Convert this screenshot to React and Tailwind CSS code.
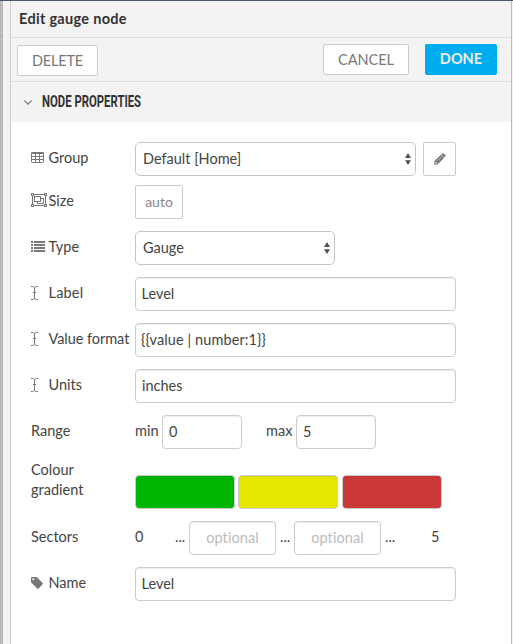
import React from "react";

const ICON = "#777777";

function TableIcon() {
  return (
    <svg width="13" height="11" viewBox="0 0 13 11" fill="none" stroke={ICON} strokeWidth="1">
      <rect x="0.5" y="0.5" width="12" height="10" rx="0.8" />
      <path d="M0.5 1.2H12.5" strokeWidth="1.6" />
      <path d="M0.5 4.5H12.5M0.5 7.5H12.5M4.5 1V10.5M8.5 1V10.5" />
    </svg>
  );
}

function ObjectGroupIcon() {
  return (
    <svg className="shrink-0" width="16" height="14" viewBox="0 0 16 14" fill="none" stroke={ICON} strokeWidth="1">
      <path d="M2.5 1.5H13.5M2.5 12.5H13.5M1.5 2.5V11.5M14.5 2.5V11.5" />
      <rect x="0.5" y="0.5" width="2" height="2" fill="#fff" />
      <rect x="13.5" y="0.5" width="2" height="2" fill="#fff" />
      <rect x="0.5" y="11.5" width="2" height="2" fill="#fff" />
      <rect x="13.5" y="11.5" width="2" height="2" fill="#fff" />
      <rect x="3.5" y="3.5" width="6" height="5" />
      <path d="M9.5 5.5H12.5V10.5H6.5V8.5" />
    </svg>
  );
}

function ListIcon() {
  return (
    <svg width="14" height="11" viewBox="0 0 14 11" fill={ICON}>
      <path d="M0 0H2V2H0zM0 3H2V5H0zM0 6H2V8H0zM0 9H2V11H0zM3 0H14V2H3zM3 3H14V5H3zM3 6H14V8H3zM3 9H14V11H3z" />
    </svg>
  );
}

function CursorIcon() {
  return (
    <svg className="translate-y-px" width="7" height="14" viewBox="0 0 7 14" fill="none" stroke={ICON} strokeWidth="1">
      <path d="M0 0.5H1.6C2.8 0.5 3.5 1 3.5 2V12C3.5 13 2.8 13.5 1.6 13.5H0M7 0.5H5.4C4.2 0.5 3.5 1 3.5 2M3.5 12C3.5 13 4.2 13.5 5.4 13.5H7M2 6.5H5" />
    </svg>
  );
}

function TagIcon() {
  return (
    <svg className="translate-y-px" width="12" height="12" viewBox="0 0 12 12" fill={ICON}>
      <path fillRule="evenodd" d="M0 1Q0 0 1 0H5Q5.8 0 6.5 .7L11.6 5.9Q12.2 6.6 11.6 7.3L7.6 11.4Q6.9 12 6.2 11.4L.7 6Q0 5.3 0 4.7zM2.3 1.3A1 1 0 1 0 2.3 3.3A1 1 0 1 0 2.3 1.3z" />
    </svg>
  );
}

function PencilIcon() {
  return (
    <svg className="-mt-px" width="12" height="12" viewBox="0 0 12 12" fill={ICON}>
      <path fillRule="evenodd" d="M0.3 8.3L6.9 1.8L10 4.9L3.5 11.4L0.3 11.7zM1.5 9L1.3 10.6L2.9 10.4L3.1 9.4L2.2 9.3zM3.2 7.7L3.5 8L7.2 4.3L6.9 4z" />
      <path d="M7.3 1.4L8.4 .4Q9 0 9.7 .4L11.4 2.2Q11.9 2.8 11.4 3.4L10.4 4.5z" />
    </svg>
  );
}

function SelectArrows() {
  return (
    <svg className="shrink-0" width="6" height="12" viewBox="0 0 6 12" fill="#505050">
      <path d="M0 5L3 0L6 5zM0 7.2H6L3 12z" />
    </svg>
  );
}

function Label({ icon, children, className = "" }) {
  return (
    <div className="flex h-8 w-[104px] shrink-0 items-center whitespace-nowrap">
      {icon && <span className="-mt-[2px] flex w-[17.5px] shrink-0 items-center">{icon}</span>}
      <span className={className}>{children}</span>
    </div>
  );
}

function Field({ className = "", children }) {
  return (
    <div className={`flex h-[34px] shrink-0 items-center rounded-[4px] border border-[#cccccc] bg-white shadow-[inset_0_1px_1px_rgba(0,0,0,0.075)] ${className}`}>
      {children}
    </div>
  );
}

function Select({ className = "", children }) {
  return (
    <div className={`flex h-[34px] shrink-0 items-center justify-between rounded-[5px] border border-[#c4c4c4] bg-white pr-[4px] pl-[7px] ${className}`}>
      {children}
      <SelectArrows />
    </div>
  );
}

function Swatch({ className }) {
  return <div className={`h-[34px] w-[100px] rounded-[4px] border border-[#cccccc] shadow-[inset_0_1px_1px_rgba(0,0,0,0.075)] ${className}`} />;
}

export default function App() {
  return (
    <div className="flex h-[644px] w-[513px] flex-col overflow-hidden bg-white font-['Lato','Liberation_Sans',sans-serif] text-[14.5px] leading-5 text-[#444444] [font-variant-ligatures:none]">
      <div className="h-px shrink-0 bg-[#4c566f]" />
      <div className="flex flex-1">
        <div className="flex w-[3px] flex-col bg-[#bbbbbb]">
          <div className="mt-[4px] h-px bg-[#a8a8a8]" />
          <div className="mt-[30px] h-px bg-[#a8a8a8]" />
        </div>
        <div className="w-[7px] bg-[#f3f3f3]" />
        <main className="flex w-[502px] flex-col border-x border-l-[#cccccc] border-r-[#bbbbbb]">
          <header className="flex h-[37px] items-center border-b border-[#dddddd] bg-[#f3f3f3] pb-px pl-2 text-[14.5px] font-bold text-[#333333]">
            <span className="tracking-[0.3px]">Edit gauge node</span>
          </header>
          <div className="flex h-11 items-start border-b border-[#dddddd] bg-[#f3f3f3] pr-[14px] pl-[6px] text-[#777777]">
            <div className="mt-[7px] flex h-[31px] w-[81px] items-center justify-center rounded-[2px] border border-[#cccccc] bg-white tracking-[-0.2px]">DELETE</div>
            <div className="mt-[6px] ml-auto flex h-[31px] w-[86px] items-center justify-center rounded-[2px] border border-[#cccccc] bg-white">CANCEL</div>
            <div className="mt-[6px] ml-4 flex h-[31px] w-[72px] items-center justify-center rounded-[2px] bg-[#00aef0] pb-px font-bold text-[#eeeeee]">DONE</div>
          </div>
          <div className="flex h-10 items-center bg-[#f3f3f3] pl-[13px]">
            <svg width="8" height="5" viewBox="0 0 8 5" fill="none" stroke="#777777" strokeWidth="1.1">
              <path d="M0.4 0.5L4 4.1L7.6 0.5" />
            </svg>
            <span className="-mt-[2px] ml-[10px] origin-left scale-x-[0.667] font-['Roboto',sans-serif] text-[17px] font-bold whitespace-nowrap text-[#333333]">NODE PROPERTIES</span>
          </div>

          <section className="flex flex-col pt-5 pl-5">
            <div className="mb-[9px] flex">
              <Label icon={<TableIcon />}>Group</Label>
              <Select className="w-[281px]">Default [Home]</Select>
              <div className="ml-[7px] flex h-[34px] w-[33px] items-center justify-center rounded-[2px] border border-[#cccccc]">
                <PencilIcon />
              </div>
            </div>
            <div className="mb-3 flex">
              <Label icon={<ObjectGroupIcon />}>Size</Label>
              <div className="flex h-[34px] w-12 items-center justify-center rounded-[2px] border border-[#cccccc] pb-px text-[14px] text-[#888888]">auto</div>
            </div>
            <div className="mb-3 flex">
              <Label icon={<ListIcon />}>Type</Label>
              <Select className="w-[200px]">Gauge</Select>
            </div>
            <div className="mb-3 flex">
              <Label icon={<CursorIcon />} className="tracking-[0.2px]">Label</Label>
              <Field className="w-[321px] pl-[5.5px]">Level</Field>
            </div>
            <div className="mb-3 flex">
              <Label icon={<CursorIcon />} className="tracking-[-0.05px]">Value format</Label>
              <Field className="w-[321px] pl-[5px] tracking-[0.1px]">{"{{value | number:1}}"}</Field>
            </div>
            <div className="mb-3 flex">
              <Label icon={<CursorIcon />}>Units</Label>
              <Field className="w-[321px] pl-[6px]">inches</Field>
            </div>
            <div className="mb-[11px] flex">
              <Label>Range</Label>
              <span className="mt-[6px] w-[27px]">min</span>
              <Field className="w-20 pl-[6px]">0</Field>
              <span className="mt-[6px] ml-6 w-[30px]">max</span>
              <Field className="w-20 pl-[6px]">5</Field>
            </div>
            <div className="mb-3 flex h-[49px] items-end">
              <span className="w-[104px] self-start">Colour<br />gradient</span>
              <div className="flex">
                <Swatch className="mr-[3px] bg-[#00b500]" />
                <Swatch className="mr-1 bg-[#e6e600]" />
                <Swatch className="bg-[#ca3838]" />
              </div>
            </div>
            <div className="mb-3 flex">
              <Label>Sectors</Label>
              <span className="mt-[6px] w-[39px]">0</span>
              <span className="mt-[6px] w-[15px] pl-px">...</span>
              <Field className="w-[87px] justify-center tracking-[0.1px] text-[#bbbbbb]">optional</Field>
              <span className="mt-[6px] w-[18px] pl-1">...</span>
              <Field className="w-[87px] justify-center tracking-[0.1px] text-[#bbbbbb]">optional</Field>
              <span className="mt-[6px] w-[50px] pl-1">...</span>
              <span className="mt-[6px]">5</span>
            </div>
            <div className="flex">
              <Label icon={<TagIcon />}>Name</Label>
              <Field className="w-[321px] pl-[5.5px]">Level</Field>
            </div>
          </section>
        </main>
        <div className="flex-1 bg-[#f3f3f3]" />
      </div>
    </div>
  );
}
